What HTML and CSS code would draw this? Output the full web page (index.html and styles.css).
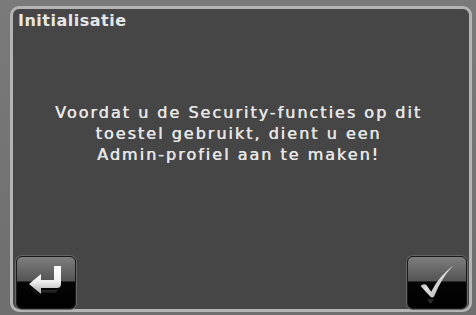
FILE: index.html
```html
<!DOCTYPE html>
<html>
<head>
<meta charset="utf-8">
<link rel="stylesheet" href="styles.css">
</head>
<body>
<div class="frame">
  <div class="title">Initialisatie</div>
  <div class="message">Voordat u de Security-functies op dit<br>toestel gebruikt, dient u een<br>Admin-profiel aan te maken!</div>
  <div class="footer">
    <div class="btn btn-back">
      <svg width="58" height="53" viewBox="0 0 58 53">
        <defs>
          <linearGradient id="ag" x1="0" y1="0" x2="0" y2="1">
            <stop offset="0" stop-color="#ffffff"/>
            <stop offset="0.55" stop-color="#f0f0f0"/>
            <stop offset="1" stop-color="#a8a8a8"/>
          </linearGradient>
          <linearGradient id="ar" x1="0" y1="0" x2="0" y2="1">
            <stop offset="0" stop-color="#666" stop-opacity="0.7"/>
            <stop offset="1" stop-color="#222" stop-opacity="0"/>
          </linearGradient>
        </defs>
        <path d="M37 10 h7 v18 a4 4 0 0 1 -4 4 h-16 v6 l-12 -10 l12 -10 v6 h13 z" fill="url(#ag)"/>
        <path d="M24 34 h17 l-2 3 h-15 z M13 31 l11 8 v3 z" fill="url(#ar)"/>
      </svg>
    </div>
    <div class="btn btn-ok">
      <svg width="60" height="52" viewBox="0 0 60 52">
        <defs>
          <linearGradient id="cg" x1="0" y1="0" x2="1" y2="1">
            <stop offset="0" stop-color="#8a8a8a"/>
            <stop offset="0.45" stop-color="#e0e0e0"/>
            <stop offset="1" stop-color="#9a9a9a"/>
          </linearGradient>
        </defs>
        <path d="M13 29 q3 -3 6 -1 l5 7 q8 -16 23 -27 q-12 12 -20 32 q-2 2 -4 0 z" fill="url(#cg)"/>
        <path d="M20 42 q4 2 7 0 l-3 5 q-2 1 -4 -5 z" fill="#555" opacity="0.5"/>
      </svg>
    </div>
  </div>
</div>
</body>
</html>
```
FILE: styles.css
```css
html, body {
  margin: 0;
  padding: 0;
}
body {
  width: 476px;
  height: 315px;
  background: linear-gradient(to bottom, #7a7a7a 0, #6e6e6e 100%);
  overflow: hidden;
}
.frame {
  box-sizing: border-box;
  margin: 6px 0 0 10px;
  width: 462px;
  height: 306px;
  border: 3px solid #b4b4b4;
  border-radius: 9px;
  background: #464646;
  display: flex;
  flex-direction: column;
  padding: 3px 2px 0 3px;
  font-family: "DejaVu Sans", Verdana, sans-serif;
  color: #e6e6e6;
}
.title {
  font-weight: bold;
  font-size: 16px;
  line-height: 18px;
  letter-spacing: 0.5px;
  padding-left: 2px;
}
.message {
  margin-top: 72px;
  padding-right: 6px;
  font-size: 16px;
  line-height: 21px;
  letter-spacing: 2px;
  text-align: center;
  text-shadow: 0.5px 0 0 #e6e6e6;
  flex: 1;
}
.footer {
  display: flex;
  justify-content: space-between;
  align-items: flex-end;
}
.btn {
  box-sizing: border-box;
  border: 1px solid #1a1a1a;
  border-radius: 6px;
  background: linear-gradient(to bottom, #7e7e7e 0%, #545454 47%, #050505 49%, #000 100%);
  box-shadow: 0 0 0 1px #666;
  display: flex;
  align-items: center;
  justify-content: center;
}
.btn svg {
  display: block;
}
.btn-back {
  width: 60px;
  height: 53px;
}
.btn-ok {
  width: 60px;
  height: 53px;
}
```
